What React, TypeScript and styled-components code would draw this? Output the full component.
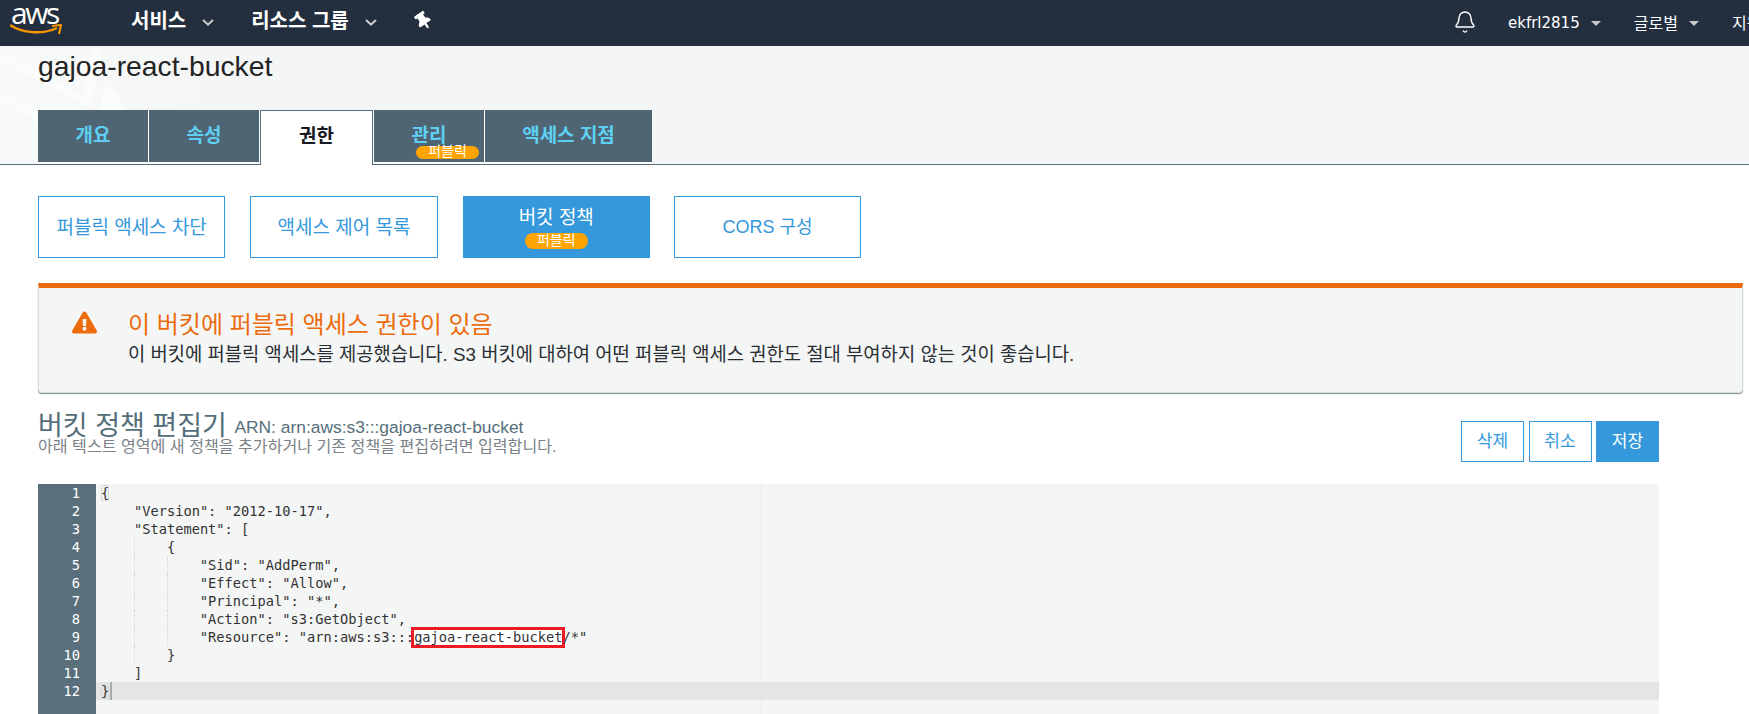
import React from "react";
import styled, { createGlobalStyle } from "styled-components";
import { Bell } from "lucide-react";
import { FaExclamationTriangle, FaThumbtack } from "react-icons/fa";

const KR = `"Liberation Sans", "Noto Sans CJK KR", sans-serif`;

const GlobalStyle = createGlobalStyle`
  html, body {
    margin: 0;
    padding: 0;
    background: #fff;
    overflow: hidden;
  }
  body {
    font-family: ${KR};
  }
`;

const POLICY = [
  { indent: 0, text: "{" },
  { indent: 1, text: `"Version": "2012-10-17",` },
  { indent: 1, text: `"Statement": [` },
  { indent: 2, text: "{" },
  { indent: 3, text: `"Sid": "AddPerm",` },
  { indent: 3, text: `"Effect": "Allow",` },
  { indent: 3, text: `"Principal": "*",` },
  { indent: 3, text: `"Action": "s3:GetObject",` },
  { indent: 3, text: `"Resource": "arn:aws:s3:::`, mark: "gajoa-react-bucket", rest: `/*"` },
  { indent: 2, text: "}" },
  { indent: 1, text: "]" },
  { indent: 0, text: "}" },
];

const Chevron = () => (
  <NavChevron viewBox="0 0 12 7">
    <path d="M1 1 L6 5.5 L11 1" fill="none" stroke="#c8c8c8" strokeWidth="2.2" />
  </NavChevron>
);

const App: React.FC = () => {
  return (
    <Page>
      <GlobalStyle />
      <Nav>
        <Logo>
          <LogoText>aws</LogoText>
          <Smile viewBox="0 0 52 12">
            <path d="M0 1 C 12 9, 32 11, 47 4" fill="none" stroke="#f79400" strokeWidth="2.4" />
            <path d="M42 2 L51 1 L49 10" fill="none" stroke="#f79400" strokeWidth="2.2" />
          </Smile>
        </Logo>
        <NavMenu $left={69}>서비스</NavMenu>
        <Chevron />
        <NavMenu $left={37}>리소스 그룹</NavMenu>
        <Chevron />
        <PinIcon />
        <NavRight>
          <BellIcon size={24} strokeWidth={1.4} color="#fff" />
          <NavUser>ekfrl2815</NavUser>
          <Caret />
          <NavRegion>글로벌</NavRegion>
          <Caret />
          <NavRegion>지원</NavRegion>
        </NavRight>
      </Nav>

      <Header>
        <Swoosh viewBox="0 0 130 119">
          <path d="M-4 8 L88 56 L97 2 M-4 48 L44 74" stroke="#fafbfb" strokeWidth="9" fill="none" />
          <path d="M104 40 C 118 40, 124 62, 124 70 L 100 70 Z" fill="#fafbfb" />
        </Swoosh>
        <Title>gajoa-react-bucket</Title>
        <Tabs>
          <Tab>개요</Tab>
          <Tab>속성</Tab>
          <ActiveTab>권한</ActiveTab>
          <Tab>
            관리
            <TabBadge>퍼블릭</TabBadge>
          </Tab>
          <Tab $wide>액세스 지점</Tab>
        </Tabs>
      </Header>

      <Content>
        <SubTabs>
          <SubTab>퍼블릭 액세스 차단</SubTab>
          <SubTab>액세스 제어 목록</SubTab>
          <SubTab $active>
            버킷 정책
            <SubBadge>퍼블릭</SubBadge>
          </SubTab>
          <SubTab>
            <CorsLabel>CORS 구성</CorsLabel>
          </SubTab>
        </SubTabs>

        <Alert>
          <AlertIcon>
            <FaExclamationTriangle size={25} />
          </AlertIcon>
          <div>
            <AlertTitle>이 버킷에 퍼블릭 액세스 권한이 있음</AlertTitle>
            <AlertText>
              이 버킷에 퍼블릭 액세스를 제공했습니다. S3 버킷에 대하여 어떤 퍼블릭 액세스 권한도 절대 부여하지 않는 것이 좋습니다.
            </AlertText>
          </div>
        </Alert>

        <EditorHead>
          <div>
            <EditorTitle>
              버킷 정책 편집기 <Arn>ARN: arn:aws:s3:::gajoa-react-bucket</Arn>
            </EditorTitle>
            <EditorHint>아래 텍스트 영역에 새 정책을 추가하거나 기존 정책을 편집하려면 입력합니다.</EditorHint>
          </div>
          <EditorActions>
            <ActionButton>삭제</ActionButton>
            <ActionButton>취소</ActionButton>
            <ActionButton $primary>저장</ActionButton>
          </EditorActions>
        </EditorHead>

        <Editor>
          <Gutter>
            {POLICY.map((_, i) => (
              <div key={i}>{i + 1}</div>
            ))}
          </Gutter>
          <Code>
            <PrintMargin />
            {POLICY.map((line, i) => (
              <CodeLine key={i} $current={i === POLICY.length - 1}>
                {line.indent > 0 && <Indent />}
                {line.indent > 1 && <Guide />}
                {line.indent > 2 && <Guide />}
                {line.indent === 0 ? <Bracket>{line.text}</Bracket> : line.text}
                {line.mark && <Marked>{line.mark}</Marked>}
                {line.rest}
                {i === POLICY.length - 1 && <Cursor />}
              </CodeLine>
            ))}
          </Code>
        </Editor>
      </Content>
    </Page>
  );
};

export default App;

const Page = styled.div`
  width: 1749px;
  height: 714px;
  overflow: hidden;
  display: flex;
  flex-direction: column;
`;

const Nav = styled.nav`
  height: 46px;
  flex: none;
  background: #232f3e;
  display: flex;
  align-items: center;
  color: #fff;
  white-space: nowrap;
`;

const Logo = styled.div`
  width: 52px;
  height: 46px;
  margin-left: 10px;
  position: relative;
`;

const LogoText = styled.span`
  position: absolute;
  left: 1px;
  top: 0;
  font-family: "Open Sans", sans-serif;
  font-size: 30px;
  line-height: 26px;
  letter-spacing: -2.5px;
  color: #fff;
`;

const Smile = styled.svg`
  position: absolute;
  left: 0;
  top: 24px;
  width: 52px;
  height: 12px;
`;

const NavMenu = styled.span<{ $left: number }>`
  margin-left: ${({ $left }) => $left}px;
  margin-bottom: 8px;
  font-size: 20px;
  font-weight: 700;
`;

const NavChevron = styled.svg`
  width: 12px;
  height: 7px;
  flex: none;
  margin-left: 16px;
  margin-bottom: 2px;
`;

const PinIcon = styled(FaThumbtack)`
  width: 15px;
  height: 18px;
  flex: none;
  margin-left: 39px;
  margin-bottom: 4px;
  transform: rotate(-35deg);
  color: #fff;
`;

const NavRight = styled.div`
  margin-left: auto;
  display: flex;
  align-items: center;
  width: 294px;
  flex: none;
`;

const BellIcon = styled(Bell)`
  flex: none;
  margin-left: -2px;
  margin-bottom: 3px;
`;

const NavUser = styled.span`
  flex: none;
  margin-left: 31px;
  font-family: "DejaVu Sans", sans-serif;
  font-size: 15px;
`;

const Caret = styled.span`
  flex: none;
  width: 0;
  height: 0;
  margin-left: 11px;
  border-left: 5px solid transparent;
  border-right: 5px solid transparent;
  border-top: 5px solid #c8c8c8;
`;

const NavRegion = styled.span`
  flex: none;
  margin-left: 33px;
  margin-bottom: 2px;
  font-size: 16px;
`;

const Header = styled.header`
  position: relative;
  height: 119px;
  flex: none;
  padding-left: 38px;
  box-sizing: border-box;
  background: linear-gradient(90deg, #f8fafa 0, #f6f8f8 120px, #f4f6f6 220px);
  border-bottom: 1px solid #546e7a;
  display: flex;
  flex-direction: column;
`;

const Swoosh = styled.svg`
  position: absolute;
  left: 0;
  top: 0;
  width: 130px;
  height: 119px;
`;

const Title = styled.h1`
  position: relative;
  margin: 5px 0 0;
  height: 30px;
  font-size: 28.3px;
  line-height: 30px;
  font-weight: 400;
  color: #232323;
`;

const Tabs = styled.div`
  position: relative;
  align-self: flex-start;
  margin-top: 29px;
  height: 54px;
  background: #fff;
  display: flex;
  align-items: flex-start;
  gap: 1px;
`;

const Tab = styled.div<{ $wide?: boolean }>`
  position: relative;
  width: ${({ $wide }) => ($wide ? 167 : 110)}px;
  height: 52px;
  box-sizing: border-box;
  padding-bottom: 6px;
  background: #4f6573;
  color: #5fd0f3;
  font-size: 19px;
  font-weight: 700;
  display: flex;
  align-items: center;
  justify-content: center;
`;

const ActiveTab = styled.div`
  width: 113px;
  height: 55px;
  box-sizing: border-box;
  padding-bottom: 8px;
  background: #fff;
  border: 1px solid #546e7a;
  border-bottom: none;
  color: #16191f;
  font-size: 19px;
  font-weight: 700;
  display: flex;
  align-items: center;
  justify-content: center;
`;

const TabBadge = styled.span`
  position: absolute;
  left: 42px;
  top: 36px;
  width: 63px;
  height: 13px;
  border-radius: 7px;
  background: #ffa400;
  color: #fff;
  font-size: 14px;
  font-weight: 400;
  line-height: 11px;
  text-align: center;
`;

const Content = styled.main`
  padding-left: 38px;
  padding-right: 6px;
  flex: 1;
  min-height: 0;
`;

const SubTabs = styled.div`
  margin-top: 31px;
  display: flex;
  gap: 25px;
`;

const SubTab = styled.div<{ $active?: boolean }>`
  width: 187.3px;
  height: 62px;
  box-sizing: border-box;
  padding-bottom: 4px;
  border: 1px solid #3498db;
  background: ${({ $active }) => ($active ? "#3498db" : "#fff")};
  color: ${({ $active }) => ($active ? "#fff" : "#3498db")};
  font-size: 19px;
  display: flex;
  flex-direction: column;
  align-items: center;
  justify-content: center;

  &:last-child {
    margin-left: -1px;
  }
`;

const CorsLabel = styled.span`
  font-size: 18px;
`;

const SubBadge = styled.span`
  width: 63px;
  height: 16px;
  margin-top: 4px;
  border-radius: 8px;
  background: #ffa400;
  color: #fff;
  font-size: 14px;
  line-height: 15px;
  text-align: center;
`;

const Alert = styled.section`
  margin-top: 25px;
  height: 110px;
  box-sizing: border-box;
  display: flex;
  align-items: flex-start;
  padding-top: 22px;
  background: #f4f6f6;
  border: 1px solid #d5dbdb;
  border-top: 5px solid #ec6b0c;
  border-radius: 0 0 4px 4px;
  box-shadow: 0 1px 1px 0 rgba(0, 28, 36, 0.5);
`;

const AlertIcon = styled.div`
  width: 89px;
  flex: none;
  padding-left: 33px;
  box-sizing: border-box;
  color: #ec6b0c;
`;

const AlertTitle = styled.div`
  font-size: 24px;
  line-height: 30px;
  color: #ec6b0c;
`;

const AlertText = styled.div`
  margin-top: 3px;
  font-size: 18.8px;
  line-height: 24px;
  color: #2a2e33;
`;

const EditorHead = styled.div`
  margin-top: 20px;
  margin-right: 84px;
  display: flex;
  justify-content: space-between;
  align-items: flex-start;
`;

const EditorTitle = styled.div`
  height: 26px;
  font-size: 27px;
  line-height: 26px;
  color: #546e7a;
`;

const Arn = styled.span`
  font-size: 17.4px;
  vertical-align: 2px;
`;

const EditorHint = styled.div`
  font-size: 16.1px;
  line-height: 14px;
  color: #7a8288;
`;

const EditorActions = styled.div`
  margin-top: 8px;
  display: flex;
  gap: 4.5px;
`;

const ActionButton = styled.div<{ $primary?: boolean }>`
  width: 63px;
  height: 41px;
  box-sizing: border-box;
  padding-bottom: 5px;
  border: 1px solid #3498db;
  background: ${({ $primary }) => ($primary ? "#3498db" : "#fff")};
  color: ${({ $primary }) => ($primary ? "#fff" : "#3498db")};
  font-size: 17px;
  display: flex;
  align-items: center;
  justify-content: center;
`;

const Editor = styled.div`
  margin-top: 22px;
  margin-right: 84px;
  height: 230px;
  display: flex;
  background: #f4f6f6;
  font-family: "DejaVu Sans Mono", monospace;
  font-size: 13.7px;
  line-height: 18px;
`;

const Gutter = styled.div`
  width: 58px;
  flex: none;
  box-sizing: border-box;
  padding-right: 16px;
  background: #5a6f7c;
  color: #fff;
  text-align: right;
`;

const Code = styled.div`
  position: relative;
  flex: 1;
  color: #333;
  white-space: pre;
`;

const PrintMargin = styled.div`
  position: absolute;
  left: 665px;
  top: 0;
  bottom: 0;
  width: 1px;
  background: #e8e8e8;
`;

const CodeLine = styled.div<{ $current?: boolean }>`
  position: relative;
  height: 18px;
  padding-left: 5px;
  background: ${({ $current }) => ($current ? "#e4e6e6" : "transparent")};
`;

const Indent = styled.span`
  display: inline-block;
  width: 4ch;
  height: 18px;
  vertical-align: top;
`;

const Guide = styled.span`
  display: inline-block;
  width: 4ch;
  height: 18px;
  box-sizing: border-box;
  vertical-align: top;
  border-left: 1px dotted #d4d6d6;
`;

const Bracket = styled.span`
  border-radius: 2px;
  box-shadow: inset 0 0 0 1px #d8d8d8;
`;

const Marked = styled.span`
  display: inline-block;
  height: 15px;
  margin-top: 2px;
  line-height: 14px;
  vertical-align: top;
  background: #fff;
  box-shadow: 0 0 0 3px #ed1c24;
`;

const Cursor = styled.span`
  position: absolute;
  left: 14px;
  top: 0;
  width: 2px;
  height: 18px;
  background: #aaa;
`;
